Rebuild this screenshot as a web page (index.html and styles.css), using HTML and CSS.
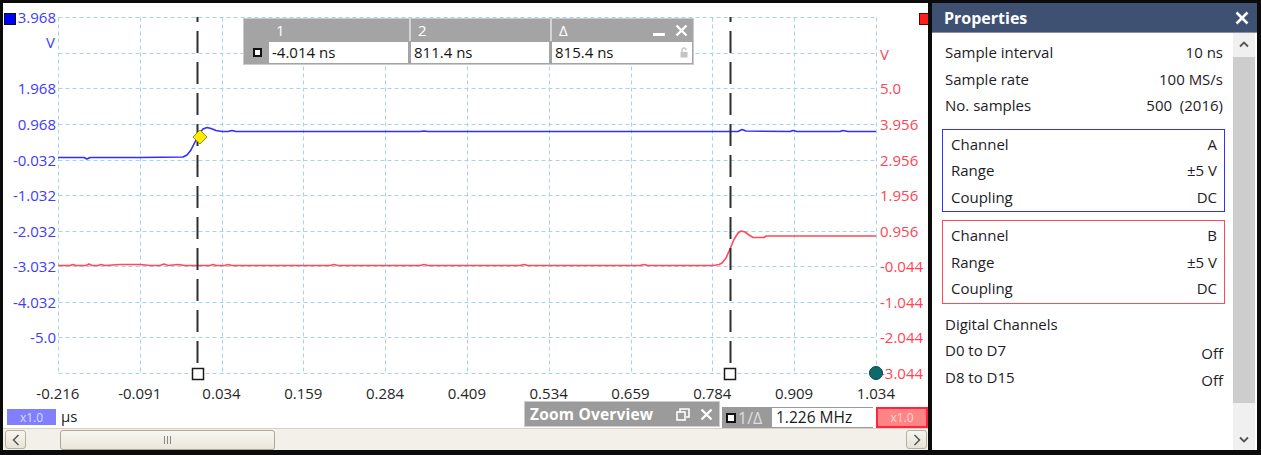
FILE: index.html
```html
<!DOCTYPE html>
<html>
<head>
<meta charset="utf-8">
<link rel="stylesheet" href="styles.css">
</head>
<body>
<div class="app">
  <div class="scope">
    <div class="plot">
      <svg class="chart" width="925" height="382" viewBox="3 3 925 382" xmlns="http://www.w3.org/2000/svg">
        <path class="grid" d="M58.5 17.5V373.5M140.5 17.5V373.5M222.5 17.5V373.5M303.5 17.5V373.5M385.5 17.5V373.5M467.5 17.5V373.5M549.5 17.5V373.5M631.5 17.5V373.5M712.5 17.5V373.5M794.5 17.5V373.5M876.5 17.5V373.5M58.5 17.5H876.5M58.5 53.5H876.5M58.5 88.5H876.5M58.5 124.5H876.5M58.5 160.5H876.5M58.5 195.5H876.5M58.5 231.5H876.5M58.5 266.5H876.5M58.5 302.5H876.5M58.5 337.5H876.5M58.5 373.5H876.5"/>
        <g class="lab-l">
          <text x="56" y="22.5">3.968</text>
          <text x="55" y="47.5">V</text>
          <text x="56" y="93.5">1.968</text>
          <text x="56" y="129.5">0.968</text>
          <text x="56" y="165.5">-0.032</text>
          <text x="56" y="200.5">-1.032</text>
          <text x="56" y="236.5">-2.032</text>
          <text x="56" y="271.5">-3.032</text>
          <text x="56" y="307.5">-4.032</text>
          <text x="56" y="342.5">-5.0</text>
        </g>
        <g class="lab-r">
          <text x="880" y="59.5">V</text>
          <text x="880" y="93.5">5.0</text>
          <text x="880" y="129.5">3.956</text>
          <text x="880" y="165.5">2.956</text>
          <text x="880" y="200.5">1.956</text>
          <text x="880" y="236.5">0.956</text>
          <text x="880" y="271.5">-0.044</text>
          <text x="880" y="307.5">-1.044</text>
          <text x="880" y="342.5">-2.044</text>
          <text x="880" y="378.5">-3.044</text>
        </g>
        <path class="trace-b" d="M58 157.5L84 157.5L87 159L90 157.5L140 157.5L183 157L187 155L191 150L195 142L199 134L203 129L207 127.5L211 128.5L216 130.5L222 131.5L228 131.5L232 130.5L236 131.5L420 131.5L424 131L428 131.5L738 131.5L742 129.5L746 131L790 131.5L793 130.5L797 131.5L840 131.5L843 130.5L848 131.5L876 131.5"/>
        <path class="trace-r" d="M58 265.5L70 265.5L73 264.5L76 265.5L86 265.5L89 264L92 265.5L98 265.5L101 264.5L105 265.5L120 264.5L140 264.5L150 265.5L160 265.5L164 264L168 265.5L178 264.5L185 265.5L210 265.5L213 264.5L216 265.5L225 265.5L228 264.5L232 265.5L300 265.5L330 265.5L334 264.5L338 265.5L420 265.5L424 264.5L428 265.5L520 265.5L524 264.5L528 265.5L600 265.5L640 265.5L644 264.5L648 265.5L712 265.5L716 265L719 264.5L722 263L726 258L730 249L734 239.5L738 233L741 231L745 232L749 235L753 237.5L764 237.5L766 236L876 236"/>
        <path class="cursor" d="M197.5 17V368M730.5 17V368"/>
        <rect class="handle" x="192.5" y="368.5" width="11" height="11"/>
        <rect class="handle" x="724.5" y="368.5" width="11" height="11"/>
        <polygon class="diamond" points="200,130 207,137 200,144 193,137"/>
        <rect x="4.5" y="13.5" width="11" height="11" fill="#0000ff" stroke="#101010" stroke-width="1"/>
        <rect x="919.5" y="13.5" width="10" height="11" fill="#ff1c1c" stroke="#600" stroke-width="1"/>
        <circle cx="876" cy="373" r="6.5" fill="#0d6a6a" stroke="#064848" stroke-width="1"/>
      </svg>
      <div class="ruler">
        <div class="rh"></div>
        <div class="rh">1</div>
        <div class="rh sep">2</div>
        <div class="rh sep">Δ
          <svg class="rmin" width="12" height="4" viewBox="0 0 12 4"><rect x="0" y="0" width="12" height="3" fill="#fff"/></svg>
          <svg class="rx" width="13" height="13" viewBox="0 0 13 13"><path d="M1.5 1.5L11.5 11.5M11.5 1.5L1.5 11.5" stroke="#fff" stroke-width="2.4"/></svg>
        </div>
        <div class="ricon"><span class="sq"></span></div>
        <div class="rc">-4.014 ns</div>
        <div class="rc">811.4 ns</div>
        <div class="rc last">815.4 ns
          <svg class="lock" width="8" height="11" viewBox="0 0 8 11"><path d="M2 5V3a2 2 0 0 1 4 0" fill="none" stroke="#c4c4c4" stroke-width="1.4"/><rect x="0.5" y="5" width="7" height="5.5" fill="#c4c4c4"/></svg>
        </div>
      </div>
    </div>
    <div class="xaxis">
      <span>-0.216</span><span>-0.091</span><span>0.034</span><span>0.159</span><span>0.284</span><span>0.409</span><span>0.534</span><span>0.659</span><span>0.784</span><span>0.909</span><span>1.034</span>
    </div>
    <div class="status">
      <span class="badge badge-blue">x1.0</span>
      <span class="unit">μs</span>
      <span class="spacer"></span>
      <div class="zoomov">
        <span class="zt">Zoom Overview</span>
        <svg class="zrest" width="14" height="13" viewBox="0 0 14 13"><rect x="1" y="4" width="8" height="8" fill="none" stroke="#fff" stroke-width="1.6"/><path d="M4 3.5V1H13V9H10" fill="none" stroke="#fff" stroke-width="1.6"/></svg>
        <svg class="zx" width="13" height="13" viewBox="0 0 13 13"><path d="M1.5 1.5L11.5 11.5M11.5 1.5L1.5 11.5" stroke="#fff" stroke-width="2.4"/></svg>
      </div>
      <div class="freq">
        <span class="sq"></span>
        <span class="inv">1/Δ</span>
        <span class="fval">1.226 MHz</span>
      </div>
      <span class="badge badge-red">x1.0</span>
    </div>
    <div class="hscroll">
      <div class="sbtn"><svg width="8" height="12" viewBox="0 0 8 12"><path d="M6.5 1L1.5 6L6.5 11" fill="none" stroke="#555" stroke-width="1.5"/></svg></div>
      <div class="thumb"><svg width="9" height="8" viewBox="0 0 9 8"><path d="M1.5 0V8M4.5 0V8M7.5 0V8" stroke="#888" stroke-width="1"/></svg></div>
      <span class="spacer"></span>
      <div class="sbtn"><svg width="8" height="12" viewBox="0 0 8 12"><path d="M1.5 1L6.5 6L1.5 11" fill="none" stroke="#555" stroke-width="1.5"/></svg></div>
    </div>
  </div>
  <div class="props">
    <div class="ptitle">
      <span>Properties</span>
      <svg width="14" height="14" viewBox="0 0 14 14"><path d="M1.5 1.5L12.5 12.5M12.5 1.5L1.5 12.5" stroke="#fff" stroke-width="2.6"/></svg>
    </div>
    <div class="pbody">
      <div class="plist">
        <div class="prow"><span>Sample interval</span><span>10 ns</span></div>
        <div class="prow"><span>Sample rate</span><span>100 MS/s</span></div>
        <div class="prow"><span>No. samples</span><span>500&nbsp; (2016)</span></div>
        <div class="pbox pbox-blue">
          <div class="prow"><span>Channel</span><span>A</span></div>
          <div class="prow"><span>Range</span><span>±5 V</span></div>
          <div class="prow"><span>Coupling</span><span>DC</span></div>
        </div>
        <div class="pbox pbox-red">
          <div class="prow"><span>Channel</span><span>B</span></div>
          <div class="prow"><span>Range</span><span>±5 V</span></div>
          <div class="prow"><span>Coupling</span><span>DC</span></div>
        </div>
        <div class="prow dig"><span>Digital Channels</span></div>
        <div class="prow"><span>D0 to D7</span><span class="low">Off</span></div>
        <div class="prow"><span>D8 to D15</span><span class="low">Off</span></div>
      </div>
      <div class="vscroll">
        <div class="vbtn"><svg width="10" height="7" viewBox="0 0 10 7"><path d="M1 5.5L5 1.5L9 5.5" fill="none" stroke="#555" stroke-width="1.8"/></svg></div>
        <div class="vthumb"></div>
        <span class="spacer"></span>
        <div class="vbtn"><svg width="10" height="7" viewBox="0 0 10 7"><path d="M1 1.5L5 5.5L9 1.5" fill="none" stroke="#555" stroke-width="1.8"/></svg></div>
      </div>
    </div>
  </div>
</div>
</body>
</html>
```
FILE: styles.css
```css
html, body {
  margin: 0;
  padding: 0;
}
body {
  width: 1261px;
  height: 455px;
  overflow: hidden;
  background: #0b0b0b;
  font-family: "Open Sans", "Noto Sans", sans-serif;
  color: #222;
}
.app {
  display: flex;
  gap: 4px;
  padding: 3px 4px 5px 3px;
  height: 455px;
  box-sizing: border-box;
}
.scope {
  width: 925px;
  flex: none;
  display: flex;
  flex-direction: column;
  background: #fff;
}
.plot {
  position: relative;
  height: 382px;
  flex: none;
}
.chart {
  display: block;
  overflow: hidden;
}
.grid {
  fill: none;
  stroke: #a3d5e6;
  stroke-width: 1;
  stroke-dasharray: 4 3;
}
.chart text {
  font-family: "Open Sans", "Noto Sans", sans-serif;
  font-size: 15px;
}
.lab-l text {
  fill: #3c3cff;
  text-anchor: end;
}
.lab-r text {
  fill: #ff4454;
  text-anchor: start;
}
.trace-b {
  fill: none;
  stroke: #2f2fff;
  stroke-width: 1.6;
  stroke-linejoin: round;
}
.trace-r {
  fill: none;
  stroke: #ff4a5a;
  stroke-width: 1.6;
  stroke-linejoin: round;
}
.cursor {
  fill: none;
  stroke: #2e2e2e;
  stroke-width: 2;
  stroke-dasharray: 22 9;
  stroke-dashoffset: 17;
}
.handle {
  fill: #fff;
  stroke: #1a1a1a;
  stroke-width: 1.5;
}
.diamond {
  fill: #ffec00;
  stroke: #9a9400;
  stroke-width: 1;
}

/* x axis labels */
.xaxis {
  height: 16px;
  flex: none;
  display: flex;
  padding-left: 14px;
  font-size: 15px;
  line-height: 16px;
  color: #262626;
}
.xaxis span {
  width: 81.8px;
  flex: none;
  text-align: center;
}

/* ruler table overlay */
.ruler {
  position: absolute;
  left: 240px;
  top: 15px;
  width: 451px;
  height: 47px;
  box-sizing: border-box;
  background: #a4a4a4;
  border: 1px solid #cbcbcb;
  padding: 0 1px 1px 0;
  display: grid;
  grid-template-columns: 22px 139px 138px 140px;
  grid-template-rows: 22px 21px;
  column-gap: 3px;
  row-gap: 1px;
  font-size: 15px;
}
.rh {
  color: #fff;
  line-height: 22px;
  padding-left: 7px;
  display: flex;
  align-items: center;
}
.rh.sep {
  margin-left: -2px;
  border-left: 2px solid #d4d4d4;
}
.rmin {
  margin-left: auto;
  margin-top: 9px;
}
.rx {
  margin-left: 10px;
  margin-right: 4px;
}
.ricon {
  display: flex;
  align-items: center;
  justify-content: center;
}
.sq {
  display: inline-block;
  width: 5px;
  height: 5px;
  border: 2px solid #111;
  background: #fff;
}
.ricon .sq {
  margin-left: 4px;
}
.rc {
  background: #fff;
  color: #141414;
  line-height: 21px;
  padding-left: 3px;
  display: flex;
  align-items: center;
}
.lock {
  margin-left: auto;
  margin-right: 4px;
}

/* status row */
.status {
  height: 27px;
  flex: none;
  display: flex;
  align-items: flex-start;
}
.badge {
  display: flex;
  align-items: center;
  justify-content: center;
  font-size: 12px;
  box-sizing: border-box;
}
.badge-blue {
  margin: 8px 0 0 4px;
  width: 49px;
  height: 16px;
  background: #8080ff;
  color: #dcdcff;
}
.unit {
  margin: 5px 0 0 5px;
  font-size: 15px;
  line-height: 20px;
  color: #222;
}
.spacer {
  flex: 1;
}
.zoomov {
  width: 196px;
  height: 26px;
  box-sizing: border-box;
  background: #9b9b9b;
  border: 1px solid #cdcdcd;
  display: flex;
  align-items: center;
  padding-left: 5px;
}
.zt {
  color: #fff;
  font-weight: bold;
  font-size: 15.5px;
  letter-spacing: 0.2px;
}
.zrest {
  margin-left: auto;
}
.zx {
  margin: 0 6px 0 10px;
}
.freq {
  margin: 6px 0 0 2px;
  width: 151px;
  height: 21px;
  background: #9a9a9a;
  display: flex;
  align-items: center;
}
.freq .sq {
  margin-left: 4px;
  width: 6px;
  height: 6px;
}
.inv {
  color: #dedede;
  font-size: 16px;
  margin-left: 2px;
  width: 34px;
}
.fval {
  background: #fff;
  color: #1a1a1a;
  font-size: 15.5px;
  height: 19px;
  line-height: 19px;
  flex: 1;
  padding-left: 4px;
}
.badge-red {
  margin: 6px 0 0 3px;
  width: 52px;
  height: 21px;
  background: #ff8585;
  border: 2px solid #ff2442;
  color: #ffd6d6;
}

/* horizontal scrollbar */
.hscroll {
  flex: 1;
  display: flex;
  align-items: center;
  background: #f3f0ea;
  border-top: 1px solid #d8d2c6;
  padding: 0 1px 0 2px;
}
.sbtn {
  width: 21px;
  height: 19px;
  box-sizing: border-box;
  border: 1px solid #b8b0a2;
  border-radius: 3px;
  background: linear-gradient(#f7f5f0, #e8e3d8);
  display: flex;
  align-items: center;
  justify-content: center;
}
.thumb {
  margin-left: 34px;
  width: 215px;
  height: 20px;
  box-sizing: border-box;
  border: 1px solid #b0a897;
  border-radius: 3px;
  background: linear-gradient(#f8f6f1, #ebe6dc);
  display: flex;
  align-items: center;
  justify-content: center;
}

/* properties panel */
.props {
  width: 325px;
  flex: none;
  background: #fff;
  display: flex;
  flex-direction: column;
}
.ptitle {
  height: 29px;
  flex: none;
  background: #3f5173;
  border-bottom: 1px solid #8a8f99;
  display: flex;
  align-items: center;
  padding: 0 8px 0 12px;
  color: #fff;
  font-weight: bold;
  font-size: 16px;
}
.ptitle svg {
  margin-left: auto;
}
.pbody {
  flex: 1;
  display: flex;
}
.plist {
  flex: 1;
  padding: 6px 8px 0 10px;
}
.prow {
  height: 26.5px;
  display: flex;
  align-items: center;
  justify-content: space-between;
  padding: 0 2px 0 3px;
  font-size: 15px;
  color: #231c26;
}
.prow .low {
  margin-top: 6px;
}
.pbox {
  border: 1.5px solid;
  padding: 1px 0;
}
.pbox .prow {
  padding: 0 7px 0 8px;
}
.pbox-blue {
  margin-top: 10px;
  border-color: #3030ff;
}
.pbox-red {
  margin-top: 8px;
  border-color: #ff4a5c;
}
.dig {
  margin-top: 7px;
}
.vscroll {
  width: 22px;
  margin-right: 2px;
  display: flex;
  flex-direction: column;
  background: #f0f0f0;
}
.vbtn {
  height: 22px;
  flex: none;
  display: flex;
  align-items: center;
  justify-content: center;
}
.vthumb {
  margin-top: 2px;
  height: 346px;
  background: #cdcdcd;
}
```
